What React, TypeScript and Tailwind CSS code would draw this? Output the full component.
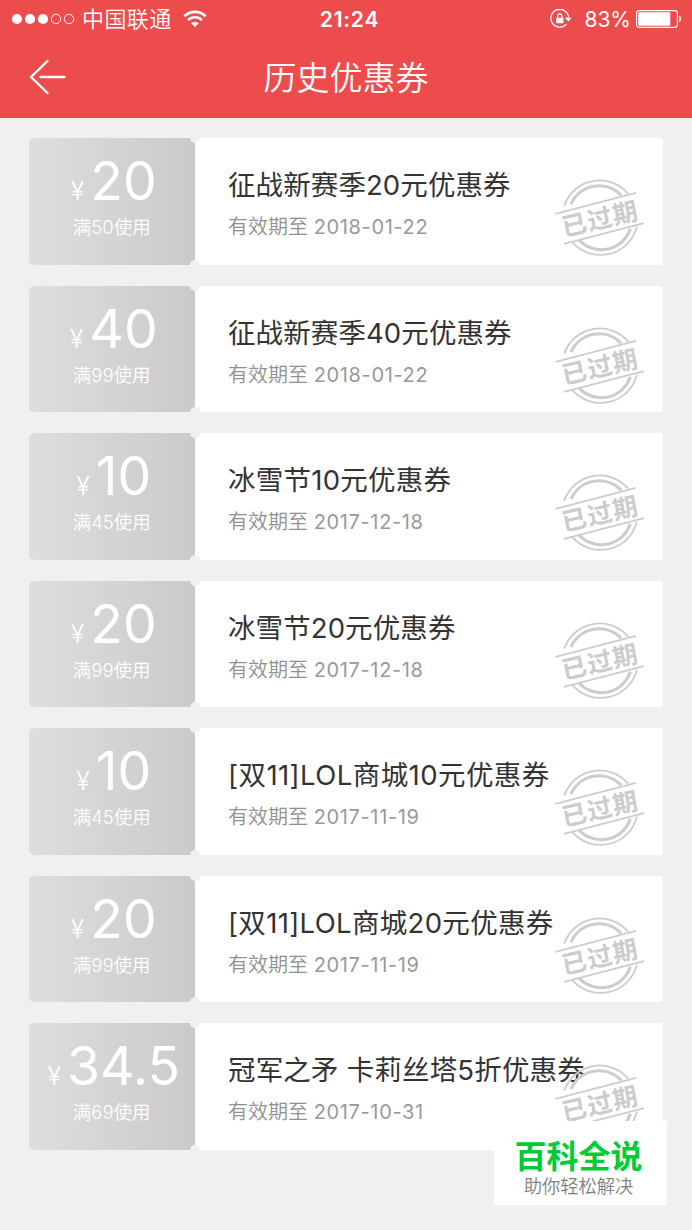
const coupons = [
  { amount: "20", limit: "满50使用", title: "征战新赛季20元优惠券", date: "2018-01-22", spacing: "tracking-[0.1px]" },
  { amount: "40", limit: "满99使用", title: "征战新赛季40元优惠券", date: "2018-01-22", spacing: "tracking-[0.1px]" },
  { amount: "10", limit: "满45使用", title: "冰雪节10元优惠券", date: "2017-12-18", spacing: "tracking-[0.25px]" },
  { amount: "20", limit: "满99使用", title: "冰雪节20元优惠券", date: "2017-12-18", spacing: "tracking-[0.1px]" },
  { amount: "10", limit: "满45使用", title: "[双11]LOL商城10元优惠券", date: "2017-11-19", spacing: "tracking-[0.43px]" },
  { amount: "20", limit: "满99使用", title: "[双11]LOL商城20元优惠券", date: "2017-11-19", spacing: "tracking-[0.33px]" },
  { amount: "34.5", limit: "满69使用", title: "冠军之矛 卡莉丝塔5折优惠券", date: "2017-10-31", spacing: "tracking-[0.18px]" },
];

function StatusBar() {
  return (
    <div className="relative flex h-[38px] items-center justify-between pl-3 pr-[10px]">
      <div className="flex items-center">
        <svg width="63" height="12" viewBox="0 0 63 12" fill="#fff" stroke="#fff">
          <circle cx="5" cy="6" r="5.1" stroke="none" />
          <circle cx="18" cy="6" r="5.1" stroke="none" />
          <circle cx="31" cy="6" r="5.1" stroke="none" />
          <circle cx="44" cy="6" r="4.7" fill="none" strokeWidth="0.9" />
          <circle cx="57" cy="6" r="4.7" fill="none" strokeWidth="0.9" />
        </svg>
        <span className="ml-[7px] text-[22px] font-[350] leading-none tracking-[0.4px]">中国联通</span>
        <svg className="ml-[11px]" width="24" height="18" viewBox="0 0 24 18" fill="none" stroke="#fff" strokeWidth="2.7">
          <path d="M1.3 6.3a15.2 15.2 0 0 1 21.4 0" />
          <path d="M5.1 10.1a9.8 9.8 0 0 1 13.8 0" />
          <path d="M12 17 8.2 13.2a5.4 5.4 0 0 1 7.6 0Z" fill="#fff" stroke="none" />
        </svg>
      </div>
      <div className="absolute inset-x-0 top-0 pl-[7px] text-center text-[21px] font-semibold leading-[39px] tracking-[0.8px]">21:24</div>
      <div className="flex items-center">
        <svg width="22" height="20" viewBox="0 0 22 20" fill="none" stroke="#fff" strokeWidth="1.3">
          <path d="M16.4 15.1A8.9 8.9 0 1 1 18.6 8.4" />
          <path d="M14.9 8.7h6.7l-3.3 3.8z" fill="#fff" stroke="none" />
          <rect x="6.2" y="8.8" width="7.2" height="5.4" rx="0.6" fill="#fff" stroke="none" />
          <path d="M7.7 9V7a2.1 2.1 0 0 1 4.2 0v2" />
        </svg>
        <span className="ml-[12px] text-[21px] leading-none">83%</span>
        <svg className="ml-[5px]" width="46" height="18" viewBox="0 0 46 18">
          <rect x="0.6" y="0.6" width="40.8" height="16.8" rx="2.6" fill="none" stroke="#fff" strokeWidth="1.1" />
          <rect x="2.3" y="2.3" width="32" height="13.4" rx="1" fill="#fff" />
          <path d="M43 5.8c3 1 3 5.4 0 6.4z" fill="#fff" />
        </svg>
      </div>
    </div>
  );
}

function Stamp() {
  return (
    <svg className="absolute right-[18px] top-[40px]" width="90" height="80" viewBox="0 0 90 80" fill="none" stroke="#ccc">
      <path d="M9.3 27.6A37.4 37.4 0 0 1 73.2 15.6" strokeWidth="1.8" />
      <path d="M16 26.1A30.6 30.6 0 0 1 66.2 17.2" strokeWidth="3" />
      <path d="M17.2 63.8A37.4 37.4 0 0 0 81.9 48.8" strokeWidth="1.8" />
      <path d="M24.2 62.2A30.6 30.6 0 0 0 75.4 50.8" strokeWidth="3" />
      <path d="M.5 35.8 81 14.8M9 65.8 89 45.2" strokeWidth="1.8" />
      <text
        x="45"
        y="51.5"
        textAnchor="middle"
        transform="rotate(-11 45 40) skewY(-2)"
        fill="#ccc"
        stroke="none"
        className="text-[25px] font-bold tracking-[1px]"
      >
        已过期
      </text>
    </svg>
  );
}

function Coupon({ amount, limit, title, date, spacing }: (typeof coupons)[number]) {
  return (
    <div className="relative flex h-[126.5px]">
      <div className="w-[165.5px] rounded-[5px] bg-linear-to-r from-[#dedede] to-[#cacaca] text-center text-white">
        <div className="mt-[11px] flex h-[63px] items-baseline justify-center whitespace-nowrap pl-[4px]">
          <span className="mr-[6px] text-[25px] font-light">¥</span>
          <span className="text-[53.5px] leading-[63px]">{amount}</span>
        </div>
        <div className="mt-[1px] text-[18.5px] font-[350] leading-[28px]">{limit}</div>
      </div>
      <div className="flex-1 rounded-r-[3px] bg-white pl-[33.5px] pt-[27px]">
        <div className={`whitespace-nowrap text-[27.5px] leading-[41px] text-[#333] ${spacing}`}>{title}</div>
        <div className="mt-[6px] text-[20px] font-[350] leading-[31px] text-[#909090]">
          有效期至 <span className="font-normal tracking-[0.65px] text-[#999]">{date}</span>
        </div>
      </div>
      {/* ticket notches */}
      <div className="absolute -top-[5px] left-[161px] h-[10px] w-[10px] rounded-full bg-[#f0f0f0]" />
      <div className="absolute -bottom-[5px] left-[161px] h-[10px] w-[10px] rounded-full bg-[#f0f0f0]" />
      <Stamp />
    </div>
  );
}

export default function App() {
  return (
    <div className="relative h-[1230px] w-[692px] overflow-hidden bg-[#f0f0f0] font-[Inter,'Noto_Sans_CJK_SC',sans-serif]">
      <header className="h-[118px] bg-[#ec4d4c] text-white">
        <StatusBar />
        <div className="relative flex h-[81px] items-center justify-center">
          <svg className="absolute left-[28px] top-[20px]" width="38" height="38" viewBox="0 0 38 38" fill="none" stroke="#fff" strokeWidth="2.4" strokeLinecap="round" strokeLinejoin="round">
            <path d="M19.5 3 3 19l16.5 16M12.5 19h24" />
          </svg>
          <h1 className="text-[33px] font-[350]">历史优惠券</h1>
        </div>
      </header>
      <main className="flex flex-col gap-[21px] pt-[20px] pl-[29px] pr-[29px]">
        {coupons.map((c, i) => (
          <Coupon key={i} {...c} />
        ))}
      </main>
      <div className="absolute left-[494px] top-[1121px] flex h-[84px] w-[173px] flex-col items-center bg-white">
        <div className="mt-[13px] pr-[4px] text-[32px] leading-[46px] font-bold text-[#0c3]">百科全说</div>
        <div className="-mt-[6px] pr-[4px] text-[18.3px] font-[350] leading-[24px] text-[#808080]">助你轻松解决</div>
      </div>
    </div>
  );
}
